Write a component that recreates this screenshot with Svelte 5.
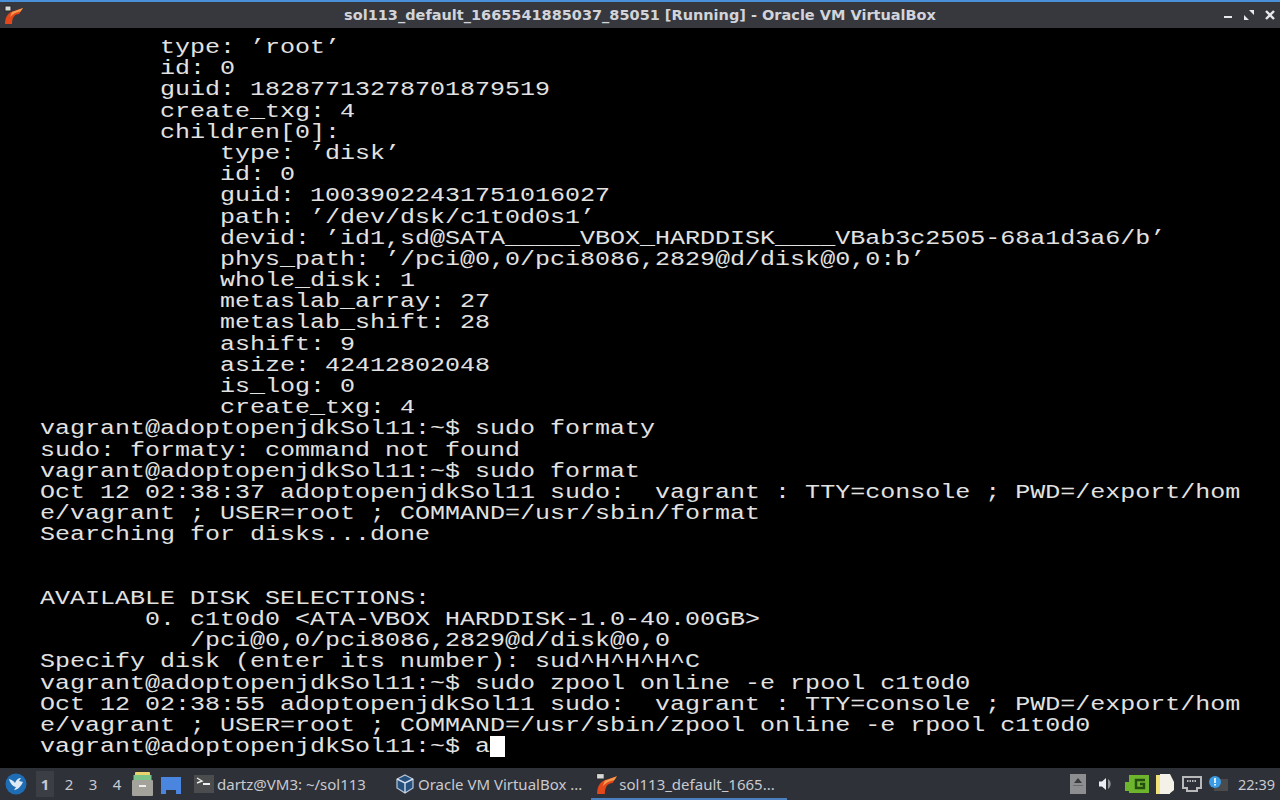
<script>
  const lines = [
    "        type: ’root’",
    "        id: 0",
    "        guid: 18287713278701879519",
    "        create_txg: 4",
    "        children[0]:",
    "            type: ’disk’",
    "            id: 0",
    "            guid: 10039022431751016027",
    "            path: ’/dev/dsk/c1t0d0s1’",
    "            devid: ’id1,sd@SATA_____VBOX_HARDDISK____VBab3c2505-68a1d3a6/b’",
    "            phys_path: ’/pci@0,0/pci8086,2829@d/disk@0,0:b’",
    "            whole_disk: 1",
    "            metaslab_array: 27",
    "            metaslab_shift: 28",
    "            ashift: 9",
    "            asize: 42412802048",
    "            is_log: 0",
    "            create_txg: 4",
    "vagrant@adoptopenjdkSol11:~$ sudo formaty",
    "sudo: formaty: command not found",
    "vagrant@adoptopenjdkSol11:~$ sudo format",
    "Oct 12 02:38:37 adoptopenjdkSol11 sudo:  vagrant : TTY=console ; PWD=/export/hom",
    "e/vagrant ; USER=root ; COMMAND=/usr/sbin/format",
    "Searching for disks...done",
    " ",
    " ",
    "AVAILABLE DISK SELECTIONS:",
    "       0. c1t0d0 <ATA-VBOX HARDDISK-1.0-40.00GB>",
    "          /pci@0,0/pci8086,2829@d/disk@0,0",
    "Specify disk (enter its number): sud^H^H^H^C",
    "vagrant@adoptopenjdkSol11:~$ sudo zpool online -e rpool c1t0d0",
    "Oct 12 02:38:55 adoptopenjdkSol11 sudo:  vagrant : TTY=console ; PWD=/export/hom",
    "e/vagrant ; USER=root ; COMMAND=/usr/sbin/zpool online -e rpool c1t0d0",
  ];
</script>

<div class="screen">
  <header class="titlebar">
    <svg class="appicon" width="20" height="20" viewBox="0 0 20 20">
      <path d="M1 19 C1 11 5 7 10 6 L19 3 L15 9 C11 9 8 12 8 19 Z" fill="#e4481a"/>
      <path d="M8 7 L19 3 L16.5 6.5 C12 7 9 9 6 12 Z" fill="#f79a4c"/>
      <rect x="1" y="1" width="6" height="5" fill="#d8d8d8" stroke="#2a2a2a" stroke-width="1"/>
    </svg>
    <div class="title">sol113_default_1665541885037_85051 [Running] - Oracle VM VirtualBox</div>
    <div class="winctl">
      <svg width="12" height="12" viewBox="0 0 12 12"><rect x="2" y="7" width="8" height="2" fill="#e6e8ee"/></svg>
      <svg width="12" height="12" viewBox="0 0 12 12"><path d="M6 1 H11 V6 Z M1 6 L6 11 H1 Z" fill="#e6e8ee"/></svg>
      <svg width="12" height="12" viewBox="0 0 12 12"><path d="M2 2 L10 10 M10 2 L2 10" stroke="#e6e8ee" stroke-width="2.4"/></svg>
    </div>
  </header>

  <main class="term">
    <div class="text">
      {#each lines as l}
        <div class="ln">{l}</div>
      {/each}
      <div class="ln">vagrant@adoptopenjdkSol11:~$ a<span class="cursor"></span></div>
    </div>
  </main>

  <footer class="panel">
    <svg class="start" width="22" height="22" viewBox="0 0 22 22">
      <circle cx="11" cy="11" r="10.5" fill="#1f6db5"/>
      <path d="M4 6 C7 7 9 8 10 10 C11 7 13 5 16 5 L14 8 L18 9 C16 13 13 17 9 17 L11 14 C8 14 5 10 4 6 Z" fill="#dfeaf5"/>
    </svg>
    <div class="pager">
      <span class="ws active">1</span><span class="ws">2</span><span class="ws">3</span><span class="ws">4</span>
    </div>
    <svg class="launch" width="21" height="26" viewBox="0 0 21 26">
      <rect x="3" y="1" width="15" height="5" rx="1" fill="#e9d36a"/>
      <rect x="1.5" y="4" width="18" height="5" fill="#7cc38a"/>
      <rect x="0" y="9" width="21" height="16" rx="1" fill="#a3a39c"/>
      <rect x="7" y="14" width="7" height="2" fill="#eee"/>
    </svg>
    <svg class="launch2" width="20" height="17" viewBox="0 0 20 17">
      <path d="M0 0 H20 V17 H15 V13 H5 V17 H0 Z" fill="#4a86e0"/>
    </svg>
    <div class="task term-task">
      <svg width="20" height="18" viewBox="0 0 20 18">
        <rect width="20" height="18" fill="#4b4c4e"/>
        <path d="M3 3 L8 6 L3 8" stroke="#eee" stroke-width="1.4" fill="none"/>
        <rect x="9" y="8" width="7" height="2" fill="#eee"/>
      </svg>
      <span>dartz@VM3: ~/sol113</span>
    </div>
    <div class="task vb-task">
      <svg width="20" height="20" viewBox="0 0 20 20">
        <path d="M10 1 L18 5 V14 L10 19 L2 14 V5 Z" fill="#26507e" stroke="#b9c8d8" stroke-width="1.2"/>
        <path d="M2 5 L10 9 L18 5 M10 9 V19" stroke="#d5deea" stroke-width="1.4" fill="none"/>
      </svg>
      <span>Oracle VM VirtualBox ...</span>
    </div>
    <div class="task sol-task">
      <svg width="22" height="22" viewBox="0 0 20 20">
        <path d="M1 19 C1 11 5 7 10 6 L19 3 L15 9 C11 9 8 12 8 19 Z" fill="#e4481a"/>
        <path d="M8 7 L19 3 L16.5 6.5 C12 7 9 9 6 12 Z" fill="#f79a4c"/>
        <rect x="0.5" y="0.5" width="7" height="5" fill="#d8d8d8" stroke="#2a2a2a" stroke-width="1"/>
      </svg>
      <span>sol113_default_1665...</span>
    </div>
    <div class="tray">
      <svg class="t1" width="16" height="20" viewBox="0 0 16 20">
        <rect width="16" height="20" fill="#8d8e90"/>
        <path d="M8 4 L12 9 H4 Z" fill="#3a3b3d"/>
        <rect x="3" y="11" width="10" height="1" fill="#6b6c6e"/>
      </svg>
      <svg class="t2" width="16" height="16" viewBox="0 0 16 16">
        <path d="M1 5.5 H4 L8 2 V14 L4 10.5 H1 Z" fill="#eceef2"/>
        <path d="M10 3 A6 6 0 0 1 10 13 Z" fill="#8f9196"/>
      </svg>
      <svg class="t3" width="24" height="20" viewBox="0 0 24 20">
        <path d="M0 8 H4 V1 H24 V19 H4 V17 H0 Z" fill="#6cb52d"/>
        <path d="M20 6 H11 V14 H19 V10 H15" stroke="#244d10" stroke-width="2.4" fill="none"/>
      </svg>
      <svg class="t4" width="20" height="22" viewBox="0 0 20 22">
        <rect x="1" y="2" width="14" height="19" fill="#f2e27a"/>
        <path d="M5 1 H15 L19 9 V17 L14 21 H5 Z" fill="#f4f2e8"/>
      </svg>
      <svg class="t5" width="20" height="18" viewBox="0 0 20 18">
        <path d="M1 2 H19 V13 H15 V16 H5 V13 H1 Z" fill="none" stroke="#b8b9bb" stroke-width="2"/>
        <path d="M5 6 H15" stroke="#b8b9bb" stroke-width="2" stroke-dasharray="1.5 1"/>
      </svg>
      <svg class="t6" width="20" height="18" viewBox="0 0 20 18">
        <rect x="6" y="4" width="14" height="12" fill="#4a4b4d"/>
        <circle cx="7" cy="7" r="6" fill="#3b9ce6"/>
        <rect x="6.2" y="3" width="1.6" height="5" fill="#fff"/>
        <rect x="6.2" y="9" width="1.6" height="1.6" fill="#fff"/>
      </svg>
      <span class="clock">22:39</span>
    </div>
  </footer>
</div>

<style>
  :global(body) { margin: 0; background: #000; }
  .screen { width: 1280px; height: 800px; display: flex; flex-direction: column; overflow: hidden; }

  .titlebar {
    height: 26px; flex: none; display: flex; align-items: center; position: relative;
    border-top: 2px solid #4a90d9;
    background: #36383e;
    color: #d2d4da;
    font: 700 14.5px "DejaVu Sans", sans-serif;
  }
  .appicon { margin-left: 4px; }
  .title { position: absolute; left: 0; right: 0; text-align: center; }
  .winctl { margin-left: auto; margin-right: 4px; display: flex; gap: 9px; position: relative; }

  .term { flex: 1; background: #000; overflow: hidden; padding-top: 9px; }
  .text {
    margin-left: 40px; width: 960px;
    transform: scaleX(1.25); transform-origin: 0 0;
    font: 20px/21.2px "Liberation Mono", monospace;
    color: #e2e2e2;
  }
  .ln { height: 21.2px; white-space: pre; }
  .cursor { display: inline-block; width: 12px; height: 21px; background: #fff; vertical-align: top; }

  .panel {
    height: 32px; flex: none; display: flex; align-items: center;
    background: #2f3138; color: #c8cad0;
    font: 15px "Noto Sans", sans-serif;
  }
  .start { margin-left: 5px; flex: none; }
  .pager { display: flex; margin-left: 9px; }
  .ws { width: 24px; height: 26px; line-height: 26px; text-align: center; }
  .ws.active { background: #3c3e45; font-weight: 700; width: 18px; margin-right: 3px; }
  .launch { margin-left: 3px; flex: none; }
  .launch2 { margin-left: 8px; flex: none; margin-top: 3px; }
  .task { display: flex; align-items: center; height: 32px; box-sizing: border-box; }
  .task span { white-space: nowrap; }
  .term-task { margin-left: 13px; gap: 3px; }
  .vb-task { margin-left: 29px; gap: 3px; }
  .sol-task { margin-left: 9px; gap: 1px; padding: 2px 12px 0 5px; border-bottom: 2px solid #4a7fc0; }
  .tray { margin-left: auto; display: flex; align-items: center; margin-right: 5px; }
  .t2 { margin-left: 12px; }
  .t3 { margin-left: 11px; }
  .t4 { margin-left: 6px; }
  .t5 { margin-left: 7px; }
  .t6 { margin-left: 6px; }
  .clock { margin-left: 10px; font-size: 14.5px; }
</style>
